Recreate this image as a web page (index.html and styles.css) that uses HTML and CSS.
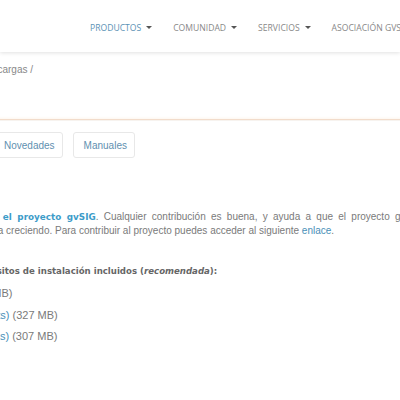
FILE: index.html
```html
<!DOCTYPE html>
<html lang="es">
<head>
<meta charset="utf-8">
<link rel="stylesheet" href="styles.css">
</head>
<body>
<header class="topbar">
  <nav class="menu">
    <a class="menu-item active" href="#">PRODUCTOS <span class="caret"></span></a>
    <a class="menu-item" href="#">COMUNIDAD <span class="caret"></span></a>
    <a class="menu-item" href="#">SERVICIOS <span class="caret"></span></a>
    <a class="menu-item" href="#">ASOCIACIÓN GVSIG</a>
  </nav>
</header>
<section class="titlebar">
  <div class="crumbs">Inicio / Descargas /</div>
</section>
<div class="tabs">
  <a class="tab tab-first" href="#">Novedades</a>
  <a class="tab" href="#">Manuales</a>
</div>
<div class="content">
  <p class="intro">
    <span class="line line1"><b class="blue">de el proyecto gvSIG</b>. Cualquier contribución es buena, y ayuda a que el proyecto gvSIG</span>
    <span class="line line2">siga creciendo. Para contribuir al proyecto puedes acceder al siguiente <a href="#">enlace</a>.</span>
  </p>
  <p class="req"><b>Requisitos de instalación incluidos (<i>recomendada</i>):</b></p>
  <ul class="files">
    <li class="f1"><a href="#">Windows 64 bits</a> (341 MB)</li>
    <li class="f2"><a href="#">(Windows 32 bits)</a> (327 MB)</li>
    <li class="f3"><a href="#">(Linux 64 bits)</a> (307 MB)</li>
  </ul>
</div>
</body>
</html>
```
FILE: styles.css
```css
html, body { margin: 0; padding: 0; background: #fff; overflow: hidden; }
body { width: 400px; height: 400px; font-family: "Liberation Sans", Arial, sans-serif; color: #777; }
a { text-decoration: none; }

.topbar {
  height: 52px;
  background: #fff;
  box-shadow: 0 1px 4px rgba(0,0,0,0.12);
  position: relative;
  display: flex;
  align-items: center;
}
.menu {
  display: flex;
  gap: 21px;
  padding-left: 90px;
  padding-top: 3px;
  white-space: nowrap;
  font-family: "Open Sans", sans-serif;
  font-size: 8.6px;
}
.menu-item { color: #888; display: flex; align-items: center; gap: 5px; }
.menu-item.active { color: #5b92b5; }
.caret {
  width: 0; height: 0;
  border-left: 3px solid transparent;
  border-right: 3px solid transparent;
  border-top: 3px solid #555;
}

.titlebar {
  height: 68px;
  border-bottom: 1px solid #f2dccb;
  box-shadow: 0 1px 0 #f7f3ef, inset 0 -3px 3px -2px #fdf6ef;
  padding-top: 12px;
  box-sizing: border-box;
}
.crumbs {
  font-size: 10px;
  color: #888;
  margin-left: -52px;
  white-space: nowrap;
}

.tabs {
  display: flex;
  gap: 10px;
  margin-top: 12px;
  margin-left: -7px;
}
.tab {
  height: 26px;
  box-sizing: border-box;
  border: 1px solid #e8e8e8;
  border-radius: 3px;
  padding: 0 7px 0 10px;
  display: flex;
  align-items: center;
  font-size: 10px;
  color: #5f90b0;
}

.content { font-size: 10px; color: #7a7a7a; }
.intro { margin: 52px 0 0; line-height: 14px; }
.line { display: block; white-space: nowrap; }
.line1 { word-spacing: 2.5px; margin-left: -15px; }
.line2 { margin-left: -15px; }
.line1 b { font-family: "DejaVu Sans", sans-serif; font-size: 8.8px; }
.blue { color: #3d9cc9; }
.intro a { color: #4a90b8; }
.req {
  margin: 28px 0 0 -31px;
  font-family: "DejaVu Sans", sans-serif;
  font-size: 8.6px;
  white-space: nowrap;
  color: #666;
}
.req i { font-weight: bold; }
.files { list-style: none; margin: 7px 0 0; padding: 0; font-size: 11px; }
.files li { height: 21.5px; line-height: 21.5px; white-space: nowrap; }
.files a { color: #4a90b8; }
.f1 { margin-left: -116px; }
.f2 { margin-left: -78px; }
.f3 { margin-left: -60px; }
```
